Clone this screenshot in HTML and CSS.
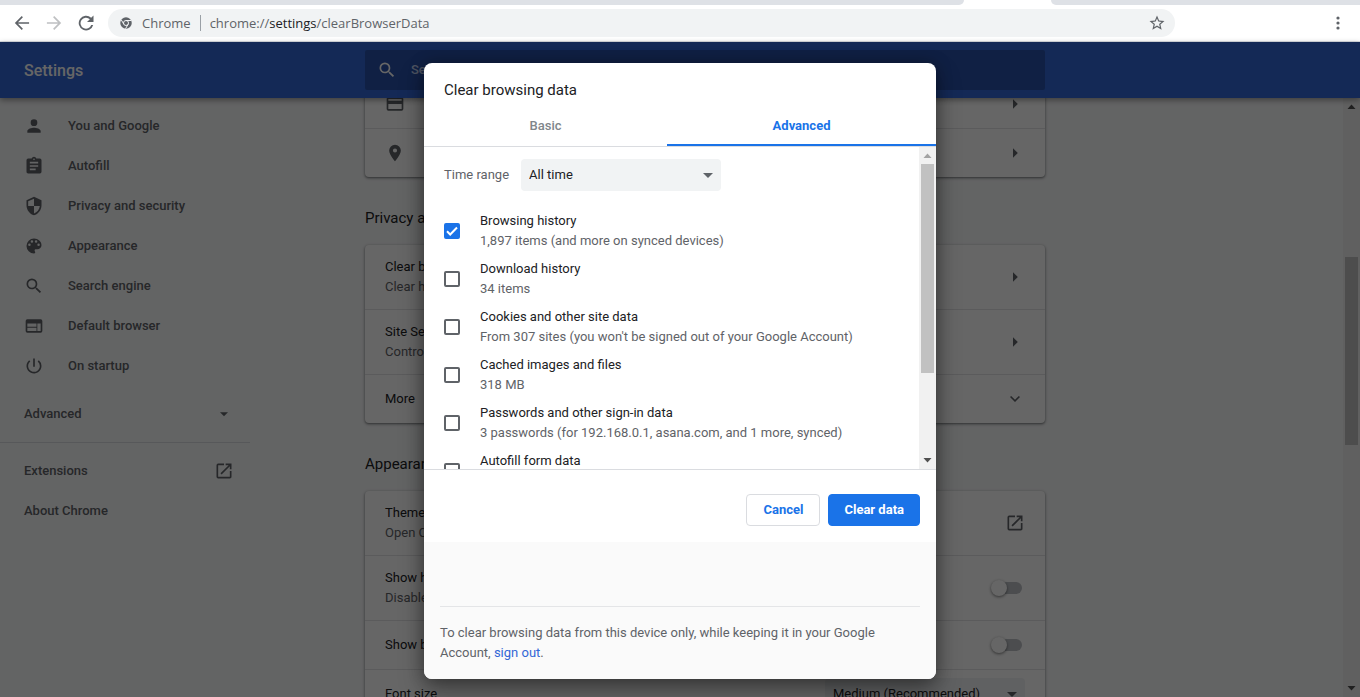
FILE: index.html
```html
<!DOCTYPE html>
<html lang="en">
<head>
<meta charset="utf-8">
<title>Settings - Clear browsing data</title>
<link rel="stylesheet" href="styles.css">
</head>
<body>
<svg class="defs" aria-hidden="true">
  <symbol id="right" viewBox="0 0 20 20"><path d="M8 5.200L12.800 10 8 14.800z"/></symbol>
  <symbol id="down" viewBox="0 0 24 24"><path d="M6 9.500l6 6 6-6z"/></symbol>
  <symbol id="open" viewBox="0 0 24 24"><path d="M19 19H5V5h7V3H5a2 2 0 0 0-2 2v14a2 2 0 0 0 2 2h14c1.100 0 2-.9 2-2v-7h-2v7zM14 3v2h3.590l-9.830 9.830 1.410 1.410L19 6.410V10h2V3h-7z"/></symbol>
  <symbol id="search" viewBox="0 0 24 24"><path d="M15.500 14h-.79l-.28-.27A6.471 6.471 0 0 0 16 9.500 6.500 6.500 0 1 0 9.500 16c1.610 0 3.090-.59 4.230-1.570l.27.28v.79l5 4.990L20.490 19l-4.990-5zm-6 0C7.010 14 5 11.990 5 9.500S7.010 5 9.500 5 14 7.010 14 9.500 11.990 14 9.500 14z"/></symbol>
  <symbol id="tri-up" viewBox="0 0 17 17"><path d="M4.500 11h8L8.500 6.500z"/></symbol>
  <symbol id="tri-down" viewBox="0 0 17 17"><path d="M4.500 6h8l-4 4.500z"/></symbol>
</svg>

<div class="window">
  <div class="tabstrip"><div class="tab tab-left"></div><div class="tab-active"></div><div class="tab tab-right"></div></div>
  <div class="toolbar">
    <button class="tool" aria-label="Back"><svg class="icon" viewBox="0 0 24 24"><path d="M20.500 11H7.200l5.900-5.900L11.700 3.700 3.400 12l8.300 8.300 1.400-1.400L7.200 13h13.300z"/></svg></button>
    <button class="tool tool-off" aria-label="Forward" disabled><svg class="icon" viewBox="0 0 24 24"><path d="M3.500 11h13.300l-5.900-5.900 1.400-1.400 8.300 8.300-8.300 8.300-1.400-1.400 5.900-5.900H3.500z"/></svg></button>
    <button class="tool" aria-label="Reload"><svg class="icon" viewBox="0 0 24 24"><path d="M18.200 5.800A8.800 8.800 0 1 0 20.600 14.300h-2.300a6.600 6.600 0 1 1-1.700-6.900L13.200 10.800H21V3z"/></svg></button>
    <div class="omnibox">
      <svg class="site" viewBox="0 0 24 24"><circle cx="12" cy="12" r="11.500"/><circle class="ring" cx="12" cy="12" r="5"/><path class="ring" d="M12 7h10.500M7.700 14.500L2.400 5.500M16.300 14.500L11 23.500"/></svg>
      <span class="origin">Chrome</span>
      <span class="url">chrome://<b>settings</b>/clearBrowserData</span>
      <button class="star" aria-label="Bookmark"><svg class="icon" viewBox="0 0 24 24"><path d="M22 9.240l-7.190-.62L12 2 9.190 8.630 2 9.240l5.460 4.730L5.820 21 12 17.270 18.180 21l-1.630-7.030L22 9.240zM12 15.400l-3.760 2.270 1-4.280-3.320-2.880 4.380-.38L12 6.100l1.710 4.040 4.380.38-3.320 2.880 1 4.280L12 15.400z"/></svg></button>
    </div>
    <div class="actions"><button class="tool" aria-label="Menu"><svg class="icon" viewBox="0 0 20 20"><circle cx="10" cy="5" r="1.600"/><circle cx="10" cy="10" r="1.600"/><circle cx="10" cy="15" r="1.600"/></svg></button></div>
  </div>

  <div class="page">
    <header class="header">
      <h1 class="brand">Settings</h1>
      <label class="search"><svg class="icon" aria-hidden="true"><use href="#search"/></svg><input type="search" placeholder="Search settings" aria-label="Search settings"></label>
    </header>
    <div class="content">
      <nav class="sidebar">
        <a class="nav" href="#people"><svg class="icon" viewBox="0 0 24 24"><path d="M12 12a4 4 0 1 0 0-8 4 4 0 0 0 0 8zm0 2c-2.670 0-8 1.340-8 4v2h16v-2c0-2.660-5.330-4-8-4z"/></svg>You and Google</a>
        <a class="nav" href="#autofill"><svg class="icon" viewBox="0 0 24 24"><path d="M19 3h-4.180a3 3 0 0 0-5.640 0H5a2 2 0 0 0-2 2v14c0 1.100.9 2 2 2h14a2 2 0 0 0 2-2V5a2 2 0 0 0-2-2zm-7 0a1 1 0 1 1 0 2 1 1 0 0 1 0-2zm2 14H7v-2h7v2zm3-4H7v-2h10v2zm0-4H7V7h10v2z"/></svg>Autofill</a>
        <a class="nav" href="#privacy"><svg class="icon" viewBox="0 0 24 24"><path d="M12 1L3 5v6c0 5.550 3.840 10.740 9 12 5.160-1.260 9-6.450 9-12V5l-9-4zm0 10.990h7c-.53 4.120-3.280 7.790-7 8.940V12H5V6.300l7-3.110v8.800z"/></svg>Privacy and security</a>
        <a class="nav" href="#appearance"><svg class="icon" viewBox="0 0 24 24"><path d="M12 3a9 9 0 0 0 0 18 1.500 1.500 0 0 0 1.110-2.510c-.23-.26-.38-.61-.38-.99 0-.83.67-1.500 1.500-1.500H16a5 5 0 0 0 5-5c0-4.420-4.030-8-9-8zm-5.500 9a1.500 1.500 0 1 1 0-3 1.500 1.500 0 0 1 0 3zm3-4a1.500 1.500 0 1 1 0-3 1.500 1.500 0 0 1 0 3zm5 0a1.500 1.500 0 1 1 0-3 1.500 1.500 0 0 1 0 3zm3 4a1.500 1.500 0 1 1 0-3 1.500 1.500 0 0 1 0 3z"/></svg>Appearance</a>
        <a class="nav" href="#engine"><svg class="icon"><use href="#search"/></svg>Search engine</a>
        <a class="nav" href="#default"><svg class="icon" viewBox="0 0 24 24"><path d="M20 4H4a2 2 0 0 0-1.990 2L2 18a2 2 0 0 0 2 2h16a2 2 0 0 0 2-2V6a2 2 0 0 0-2-2zm-5 14H4v-4h11v4zm0-5H4V9h11v4zm5 5h-4V9h4v9z"/></svg>Default browser</a>
        <a class="nav" href="#startup"><svg class="icon" viewBox="0 0 24 24"><path d="M13 3h-2v10h2V3zm4.830 2.170l-1.420 1.420A6.920 6.920 0 0 1 19 12a7 7 0 1 1-11.420-5.420L6.170 5.170A9 9 0 1 0 21 12a8.930 8.930 0 0 0-3.170-6.830z"/></svg>On startup</a>
        <button class="nav nav-wide nav-advanced">Advanced<svg class="icon caret"><use href="#down"/></svg></button>
        <hr class="nav-rule">
        <a class="nav nav-wide" href="#extensions">Extensions<svg class="icon"><use href="#open"/></svg></a>
        <a class="nav nav-wide" href="#about">About Chrome</a>
      </nav>
      <main class="main">
        <section class="card card-cut">
          <a class="row" href="#payment" aria-label="Payment methods"><svg class="icon lead" viewBox="0 0 24 24"><path d="M20 4H4a2 2 0 0 0-1.990 2L2 18a2 2 0 0 0 2 2h16a2 2 0 0 0 2-2V6a2 2 0 0 0-2-2zm0 14H4v-6h16v6zm0-10H4V6h16v2z"/></svg><svg class="icon end"><use href="#right"/></svg></a>
          <a class="row" href="#addresses" aria-label="Addresses and more"><svg class="icon lead" viewBox="0 0 24 24"><path d="M12 2a7 7 0 0 0-7 7c0 5.250 7 13 7 13s7-7.750 7-13a7 7 0 0 0-7-7zm0 9.500a2.500 2.500 0 1 1 0-5 2.500 2.500 0 0 1 0 5z"/></svg><svg class="icon end"><use href="#right"/></svg></a>
        </section>
        <h2 class="heading">Privacy and security</h2>
        <section class="card">
          <a class="row row-two" href="#clear"><span>Clear browsing data<small>Clear history</small></span><svg class="icon end"><use href="#right"/></svg></a>
          <a class="row row-two" href="#site"><span>Site Settings<small>Control</small></span><svg class="icon end"><use href="#right"/></svg></a>
          <button class="row">More<svg class="icon end" viewBox="0 0 24 24"><path d="M7.400 8.300L12 12.900l4.600-4.600L18 9.700l-6 6-6-6z"/></svg></button>
        </section>
        <h2 class="heading">Appearance</h2>
        <section class="card">
          <a class="row row-two" href="#themes"><span>Themes<small>Open Chrome Web Store</small></span><svg class="icon end"><use href="#open"/></svg></a>
          <label class="row row-two"><span>Show home button<small>Disabled</small></span><input class="toggle end" type="checkbox"></label>
          <label class="row"><span>Show bookmarks bar</span><input class="toggle end" type="checkbox"></label>
          <div class="row"><label for="font">Font size</label><span class="select end"><select id="font"><option>Medium (Recommended)</option></select><svg class="caret"><use href="#down"/></svg></span></div>
        </section>
      </main>
      <div class="scroll scroll-page" aria-hidden="true"><svg><use href="#tri-up"/></svg><i class="thumb"></i><svg class="last"><use href="#tri-down"/></svg></div>
    </div>

    <div class="backdrop">
      <div class="dialog" role="dialog" aria-labelledby="dialog-title">
        <h2 class="dialog-title" id="dialog-title">Clear browsing data</h2>
        <div class="tabs" role="tablist"><button class="dtab" role="tab">Basic</button><button class="dtab dtab-on" role="tab" aria-selected="true">Advanced</button></div>
        <div class="pane">
          <div class="options">
            <div class="range"><label for="range">Time range</label><span class="select"><select id="range"><option>All time</option></select><svg class="caret"><use href="#down"/></svg></span></div>
            <label class="option"><input class="check" type="checkbox" checked><svg class="tick" viewBox="0 0 16 16"><path d="M3 8.300l3.200 3.200L13 4.500"/></svg><span>Browsing history<small>1,897 items (and more on synced devices)</small></span></label>
            <label class="option"><input class="check" type="checkbox"><span>Download history<small>34 items</small></span></label>
            <label class="option"><input class="check" type="checkbox"><span>Cookies and other site data<small>From 307 sites (you won't be signed out of your Google Account)</small></span></label>
            <label class="option"><input class="check" type="checkbox"><span>Cached images and files<small>318 MB</small></span></label>
            <label class="option"><input class="check" type="checkbox"><span>Passwords and other sign-in data<small>3 passwords (for 192.168.0.1, asana.com, and 1 more, synced)</small></span></label>
            <label class="option"><input class="check" type="checkbox"><span>Autofill form data</span></label>
          </div>
          <div class="scroll scroll-dialog" aria-hidden="true"><svg class="dim"><use href="#tri-up"/></svg><i class="thumb"></i><svg class="last"><use href="#tri-down"/></svg></div>
        </div>
        <div class="buttons"><button class="btn btn-plain">Cancel</button><button class="btn btn-main">Clear data</button></div>
        <footer class="foot"><p class="note">To clear browsing data from this device only, while keeping it in your Google Account, <a href="#signout">sign out</a>.</p></footer>
      </div>
    </div>
  </div>
</div>
</body>
</html>
```
FILE: styles.css
```css
* { box-sizing: border-box; }
body { margin: 0; font: 13px/20px Roboto, "Liberation Sans", sans-serif; color: #202124; }
button, input, select { font: inherit; color: inherit; margin: 0; padding: 0; border: 0; background: none; }
a { color: inherit; text-decoration: none; }
h1, h2, p { margin: 0; font-weight: 400; }
small { display: block; font-size: 13px; color: #5f6368; }
.defs { display: none; }
.icon { width: 20px; height: 20px; flex: none; display: block; fill: #5f6368; }

.window { height: 100vh; display: flex; flex-direction: column; overflow: hidden; }
.tabstrip { display: flex; height: 5px; background: #fff; }
.tab { background: #dee1e6; }
.tab-left { flex: 964; border-bottom-right-radius: 6px; }
.tab-active { flex: 87; }
.tab-right { flex: 309; border-bottom-left-radius: 6px; }

.toolbar { display: flex; align-items: center; height: 37px; background: #fff; border-bottom: 1px solid #dcdee2; padding-left: 12px; }
.tool { width: 20px; height: 20px; margin-right: 12px; }
.tool-off { opacity: .4; }
.omnibox { flex: 1; display: flex; align-items: center; height: 28px; border-radius: 14px; background: #f1f3f4; padding: 0 9px 0 12px; font: 13px/20px "Open Sans", "Noto Sans", sans-serif; color: #5f6368; }
.site { width: 12px; height: 12px; fill: #5f6368; margin-right: 10px; }
.ring { fill: none; stroke: #f1f3f4; stroke-width: 2; }
.origin { padding-right: 9px; border-right: 1px solid #9aa0a6; line-height: 16px; margin-right: 9px; }
.url b { font-weight: 400; color: #202124; }
.star { margin-left: auto; }
.star .icon { width: 18px; height: 18px; }
.actions { flex: 0 0 185px; display: flex; justify-content: flex-end; }

.page { position: relative; flex: 1; min-height: 0; display: flex; flex-direction: column; background: #f8f9fa; }
.header { display: grid; grid-template-columns: 365fr minmax(0, 680px) 315fr; align-items: center; height: 56px; flex: none; background: #3367d6; color: #fff; z-index: 1; box-shadow: 0 2px 6px rgba(0, 0, 0, .4); }
.brand { font-size: 16px; font-weight: 500; padding: 2px 0 0 24px; }
.search { display: flex; align-items: center; gap: 14px; height: 40px; padding-left: 12px; background: #2a52ab; border-radius: 2px; }
.search .icon { fill: #fff; }
.search input { flex: 1; font-weight: 500; outline: 0; }
.search input::placeholder { color: #c2d1f3; opacity: 1; }

.content { flex: 1; min-height: 0; display: grid; grid-template-columns: 365fr minmax(0, 680px) 298fr 17px; overflow: hidden; }
.sidebar { width: 250px; padding-top: 8px; color: #5f6368; font-weight: 500; }
.nav { display: flex; align-items: center; gap: 24px; width: 100%; height: 40px; padding-left: 24px; }
.nav-wide { justify-content: space-between; padding-right: 16px; }
.nav-advanced { margin-top: 8px; font-weight: 500; }
.nav-rule { height: 1px; border: 0; margin: 8px 0; background: #dadce0; }

.main { min-height: 0; overflow: visible; }
.card { background: #fff; border-radius: 4px; box-shadow: 0 1px 2px rgba(60, 64, 67, .5), 0 1px 3px 1px rgba(60, 64, 67, .2); }
.card-cut { margin-top: -18px; }
.row { display: flex; align-items: center; width: 100%; min-height: 48px; padding: 0 20px; text-align: left; }
.row + .row { border-top: 1px solid #e3e4e6; min-height: 49px; }
.row-two { min-height: 64px; }
.row + .row-two { min-height: 65px; }
.end { margin-left: auto; }
.heading { height: 68px; padding-top: 30px; font-size: 15px; line-height: 22px; }

.toggle { appearance: none; position: relative; width: 34px; height: 16px; }
.toggle::before { content: ""; position: absolute; left: 3px; top: 2px; width: 28px; height: 12px; border-radius: 6px; background: #bdc1c6; }
.toggle::after { content: ""; position: absolute; left: 0; top: 0; width: 16px; height: 16px; border-radius: 50%; background: #fff; box-shadow: 0 1px 3px rgba(0, 0, 0, .5); }

.select { position: relative; width: 200px; height: 32px; }
.select select { appearance: none; width: 100%; height: 100%; padding: 0 8px; border-radius: 4px; background: #f1f3f4; }
.select .caret { position: absolute; right: 3px; top: 6px; width: 20px; height: 20px; fill: #5f6368; }
.nav .caret { width: 16px; height: 16px; margin-right: 2px; }

.scroll { display: grid; background: #f1f1f1; justify-items: center; }
.scroll-page { grid-column: 4; grid-template-rows: 17px 142fr 188fr 235fr 17px; }
.scroll-dialog { grid-template-rows: 17px 209fr 79fr 17px; width: 17px; }
.scroll svg { width: 17px; height: 17px; fill: #505050; }
.scroll .dim { fill: #a3a3a3; }
.thumb { width: 13px; background: #c1c1c1; }
.scroll-page .thumb { grid-row: 3; }
.scroll-page .last { grid-row: 5; }
.scroll-dialog .last { grid-row: 4; }

.backdrop { position: absolute; inset: 0; z-index: 2; display: flex; justify-content: center; align-items: center; padding-top: 3px; background: rgba(0, 0, 0, .6); }
.dialog { width: 512px; max-height: 100%; display: flex; flex-direction: column; overflow: hidden; border-radius: 8px; background: #fff; box-shadow: 0 0 16px rgba(0, 0, 0, .3), 0 12px 24px rgba(0, 0, 0, .35); }
.dialog-title { padding: 17px 20px 6px; font-size: 15px; }
.tabs { display: flex; border-bottom: 1px solid #dadce0; }
.dtab { flex: 1 1 auto; height: 40px; padding-top: 2px; font-weight: 500; color: #80868b; border-bottom: 2px solid transparent; }
.dtab-on { color: #1a73e8; border-bottom-color: #1a73e8; font-weight: 700; }
.pane { display: flex; height: 323px; border-bottom: 1px solid #dadce0; overflow: hidden; }
.options { flex: 1; min-width: 0; padding: 12px 0 0 20px; overflow: hidden; }
.range { display: flex; align-items: center; gap: 12px; margin-bottom: 16px; color: #5f6368; }
.range select { color: #202124; }
.option { position: relative; display: flex; align-items: center; gap: 20px; min-height: 48px; padding: 4px 0; }
.option:last-child { align-items: flex-start; }
.option:last-child .check { margin-top: 12px; }
.check { appearance: none; flex: none; width: 16px; height: 16px; border: 2px solid #5f6368; border-radius: 2px; }
.check:checked { border-color: #1a73e8; background: #1a73e8; }
.tick { position: absolute; left: 0; top: 16px; width: 16px; height: 16px; fill: none; stroke: #fff; stroke-width: 2; }
.buttons { display: flex; justify-content: flex-end; gap: 8px; padding: 24px 16px 16px; }
.btn { height: 32px; padding: 0 15px; border: 1px solid #dadce0; border-radius: 4px; color: #1a73e8; font-weight: 700; }
.btn-plain { padding: 0 16px; }
.btn-main { border-color: #1a73e8; background: #1a73e8; color: #fff; }
.foot { padding: 64px 16px 16px; background: #fafafa; color: #5f6368; }
.note { padding-top: 16px; border-top: 1px solid #e4e5e7; }
.note a { color: #3367d6; }
```
